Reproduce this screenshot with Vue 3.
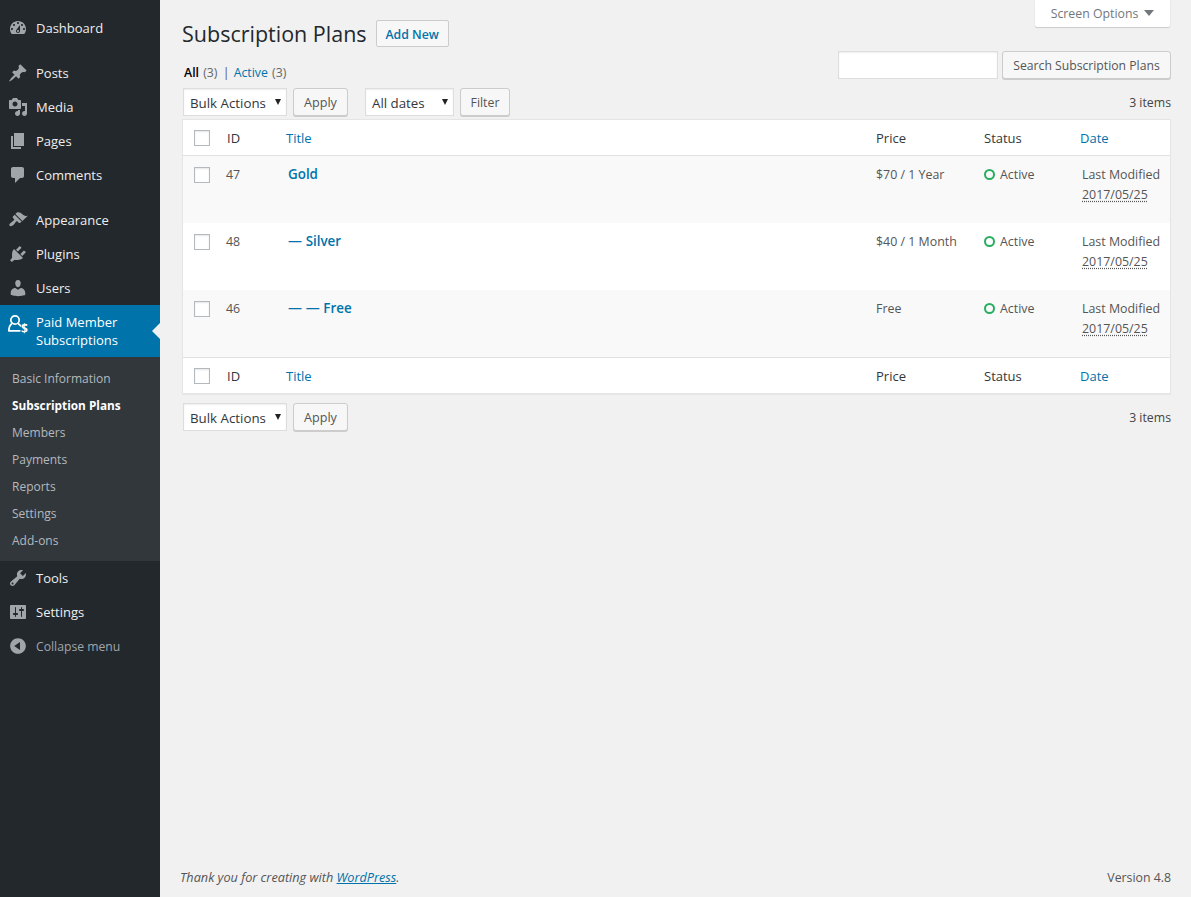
<script setup>
const ic = {
  dashboard: 'M3.76 16h12.48c1.1-1.37 1.76-3.11 1.76-5 0-4.42-3.58-8-8-8s-8 3.58-8 8c0 1.89.66 3.63 1.76 5zM10 4c.55 0 1 .45 1 1s-.45 1-1 1-1-.45-1-1 .45-1 1-1zM6 6c.55 0 1 .45 1 1s-.45 1-1 1-1-.45-1-1 .45-1 1-1zm8 0c.55 0 1 .45 1 1s-.45 1-1 1-1-.45-1-1 .45-1 1-1zm-5.37 5.55L12 7v6c0 1.1-.9 2-2 2s-2-.9-2-2c0-.57.24-1.08.63-1.45zM4 10c.55 0 1 .45 1 1s-.45 1-1 1-1-.45-1-1 .45-1 1-1zm12 0c.55 0 1 .45 1 1s-.45 1-1 1-1-.45-1-1 .45-1 1-1zm-5 3c0-.55-.45-1-1-1s-1 .45-1 1 .45 1 1 1 1-.45 1-1z',
  posts: 'M10.44 3.02l1.82-1.82 6.36 6.35-1.83 1.82c-1.05-.68-2.48-.57-3.41.36l-.75.75c-.92.93-1.04 2.35-.35 3.41l-1.83 1.82-2.41-2.41-2.8 2.79c-.42.42-3.38 2.71-3.8 2.29s1.86-3.39 2.28-3.81l2.79-2.79L4.1 9.36l1.83-1.82c1.05.69 2.48.57 3.4-.36l.75-.75c.93-.92 1.05-2.35.36-3.41z',
  media: 'M13 11V4c0-.55-.45-1-1-1h-1.67L9 1H5L3.67 3H2c-.55 0-1 .45-1 1v7c0 .55.45 1 1 1h10c.55 0 1-.45 1-1zM7 4.5c1.38 0 2.5 1.12 2.5 2.5S8.38 9.5 7 9.5 4.5 8.38 4.5 7 5.62 4.5 7 4.5zM14 6h5v10.5c0 1.38-1.12 2.5-2.5 2.5S14 17.88 14 16.5s1.12-2.5 2.5-2.5c.17 0 .34.02.5.05V9h-3V6zm-4 8.05V13h2v3.5c0 1.38-1.12 2.5-2.5 2.5S7 17.88 7 16.5 8.12 14 9.5 14c.17 0 .34.02.5.05z',
  pages: 'M6 15V2h10v13H6zm-1 1h8v2H3V5h2v11z',
  comments: 'M5 2h9c1.1 0 2 .9 2 2v7c0 1.1-.9 2-2 2h-2l-5 5v-5H5c-1.1 0-2-.9-2-2V4c0-1.1.9-2 2-2z',
  appearance: 'M14.48 11.06L7.41 3.99l1.5-1.5c.5-.56 2.3-.47 3.51.32 1.21.8 1.43 1.28 2.91 2.1 1.18.64 2.45 1.26 4.45.85zm-.71.71L6.7 4.7 4.93 6.47c-.39.39-.39 1.02 0 1.41l1.06 1.06c.39.39.39 1.03 0 1.42-.6.6-1.43 1.11-2.21 1.69-.35.26-.7.53-1.01.84C1.43 13.23.91 15.04 1.72 15.85s2.62.29 3.94-1.04c.31-.31.58-.66.84-1.01.58-.78 1.09-1.61 1.69-2.21.39-.39 1.02-.39 1.41 0l1.06 1.06c.39.39 1.02.39 1.41 0z',
  plugins: 'M13.11 4.36L9.87 7.6 8 5.73l3.24-3.24c.35-.34 1.05-.2 1.56.32.52.51.66 1.21.31 1.55zm-8 1.77l.91-1.12 9.01 9.01-1.19.84c-.71.71-2.63 1.16-3.82 1.16H6.14L4.9 17.26c-.59.59-1.54.59-2.12 0-.59-.58-.59-1.53 0-2.12l1.24-1.24v-3.88c0-1.13.4-3.19 1.09-3.89zm7.26 3.97l3.24-3.24c.34-.35 1.04-.21 1.55.31.52.51.66 1.21.31 1.55l-3.24 3.25z',
  users: 'M10 9.25c-2.27 0-2.73-3.44-2.73-3.44C7 4.02 7.82 2 9.97 2c2.16 0 2.98 2.02 2.71 3.81 0 0-.41 3.44-2.68 3.44zm0 2.57L12.72 10c2.39 0 4.52 2.33 4.52 4.53v2.49s-3.65 1.13-7.24 1.13c-3.65 0-7.24-1.13-7.24-1.13v-2.49c0-2.25 1.94-4.48 4.47-4.48z',
  tools: 'M16.68 9.77c-1.34 1.34-3.3 1.67-4.95.99l-5.41 6.52c-.99.99-2.59.99-3.58 0s-.99-2.59 0-3.57l6.52-5.42c-.68-1.65-.35-3.61.99-4.95 1.28-1.28 3.12-1.62 4.72-1.06l-2.89 2.89 2.82 2.82 2.86-2.87c.53 1.58.18 3.39-1.08 4.65zM3.81 16.21c.4.39 1.04.39 1.43 0 .4-.4.4-1.04 0-1.43-.39-.4-1.03-.4-1.43 0-.39.39-.39 1.03 0 1.43z',
  settings: 'M18 16V4c0-.55-.45-1-1-1H3c-.55 0-1 .45-1 1v12c0 .55.45 1 1 1h14c.55 0 1-.45 1-1zM8 11h1c.55 0 1 .45 1 1s-.45 1-1 1H8v1.5c0 .28-.22.5-.5.5s-.5-.22-.5-.5V13H6c-.55 0-1-.45-1-1s.45-1 1-1h1V5.5c0-.28.22-.5.5-.5s.5.22.5.5V11zm5-2h-1c-.55 0-1-.45-1-1s.45-1 1-1h1V5.5c0-.28.22-.5.5-.5s.5.22.5.5V7h1c.55 0 1 .45 1 1s-.45 1-1 1h-1v5.5c0 .28-.22.5-.5.5s-.5-.22-.5-.5V9z',
  collapse: 'M10 2.16c4.33 0 7.84 3.51 7.84 7.84s-3.51 7.84-7.84 7.84S2.16 14.33 2.16 10 5.71 2.16 10 2.16zm2 11.72V6.12L6.18 9.97z'
}
const group1 = [['Posts','posts'],['Media','media'],['Pages','pages'],['Comments','comments']]
const group2 = [['Appearance','appearance'],['Plugins','plugins'],['Users','users']]
const sub = ['Basic Information','Subscription Plans','Members','Payments','Reports','Settings','Add-ons']
const rows = [
  { id: 47, prefix: '', title: 'Gold', price: '$70 / 1 Year' },
  { id: 48, prefix: '— ', title: 'Silver', price: '$40 / 1 Month' },
  { id: 46, prefix: '— — ', title: 'Free', price: 'Free' }
]
</script>

<template>
  <div class="page">
    <aside class="side">
      <ul class="menu first">
        <li class="item"><svg class="ico" viewBox="0 0 20 20"><path :d="ic.dashboard"/></svg>Dashboard</li>
      </ul>
      <ul class="menu">
        <li v-for="g in group1" :key="g[0]" class="item"><svg class="ico" viewBox="0 0 20 20"><path :d="ic[g[1]]"/></svg>{{ g[0] }}</li>
      </ul>
      <ul class="menu">
        <li v-for="g in group2" :key="g[0]" class="item"><svg class="ico" viewBox="0 0 20 20"><path :d="ic[g[1]]"/></svg>{{ g[0] }}</li>
        <li class="item current">
          <svg class="ico pms" viewBox="0 0 24 24">
            <circle cx="9" cy="9" r="4.200" fill="none" stroke="#fff" stroke-width="1.700"/>
            <path d="M5.700 12.600C3.800 14.200 2.800 16.800 2.800 19.800h11" fill="none" stroke="#fff" stroke-width="1.700" stroke-linecap="round" stroke-linejoin="round"/>
            <path d="M12.500 12.700c.8.6 1.500 1.300 2 2.200" fill="none" stroke="#fff" stroke-width="1.700" stroke-linecap="round"/>
          </svg>
          <span class="dollar">$</span>
          <span>Paid Member<br>Subscriptions</span>
        </li>
        <li class="submenu">
          <a v-for="s in sub" :key="s" :class="{ on: s === 'Subscription Plans' }">{{ s }}</a>
        </li>
        <li class="item"><svg class="ico" viewBox="0 0 20 20"><path :d="ic.tools"/></svg>Tools</li>
        <li class="item"><svg class="ico" viewBox="0 0 20 20"><path :d="ic.settings"/></svg>Settings</li>
        <li class="item collapse"><svg class="ico" viewBox="0 0 20 20"><path :d="ic.collapse"/></svg>Collapse menu</li>
      </ul>
    </aside>

    <main class="main">
      <div class="screen-wrap"><button class="screen">Screen Options<i class="tri"></i></button></div>

      <div class="heading">
        <h1>Subscription Plans</h1>
        <a class="add">Add New</a>
      </div>

      <div class="filters">
        <div class="views"><b>All</b> <span class="n">(3)</span> <span class="sep">|</span> <a>Active</a> <span class="n">(3)</span></div>
        <div class="search"><input type="text"><button class="btn">Search Subscription Plans</button></div>
      </div>

      <div class="nav top">
        <div class="sel w104"><select><option>Bulk Actions</option></select></div>
        <button class="btn apply">Apply</button>
        <div class="sel w89 gap"><select><option>All dates</option></select></div>
        <button class="btn filter">Filter</button>
        <span class="count">3 items</span>
      </div>

      <table class="tbl">
        <thead>
          <tr>
            <th class="c-cb"><i class="cb"></i></th>
            <th class="c-id">ID</th>
            <th class="c-title"><a>Title</a></th>
            <th class="c-price">Price</th>
            <th class="c-status">Status</th>
            <th class="c-date"><a>Date</a></th>
          </tr>
        </thead>
        <tbody>
          <tr v-for="r in rows" :key="r.id">
            <td class="c-cb"><i class="cb"></i></td>
            <td class="c-id">{{ r.id }}</td>
            <td class="c-title"><a>{{ r.prefix }}<strong>{{ r.title }}</strong></a></td>
            <td class="c-price">{{ r.price }}</td>
            <td class="c-status"><i class="dot"></i>Active</td>
            <td class="c-date">Last Modified<br><abbr>2017/05/25</abbr></td>
          </tr>
        </tbody>
        <tfoot>
          <tr>
            <th class="c-cb"><i class="cb"></i></th>
            <th class="c-id">ID</th>
            <th class="c-title"><a>Title</a></th>
            <th class="c-price">Price</th>
            <th class="c-status">Status</th>
            <th class="c-date"><a>Date</a></th>
          </tr>
        </tfoot>
      </table>

      <div class="nav bottom">
        <div class="sel w104"><select><option>Bulk Actions</option></select></div>
        <button class="btn apply">Apply</button>
        <span class="count">3 items</span>
      </div>

      <footer class="foot">
        <span class="thanks">Thank you for creating with <a>WordPress</a>.</span>
        <span>Version 4.8</span>
      </footer>
    </main>
  </div>
</template>

<style>
html, body { margin: 0; background: #f1f1f1; }
</style>

<style scoped>
.page { display: flex; min-height: 897px; font-family: "Open Sans", "Noto Sans", sans-serif; font-size: 12.300px; color: #444; }
ul { list-style: none; margin: 0; padding: 0; }
a { color: #0073aa; }

.side { width: 160px; flex: none; background: #23282d; color: #eee; font-size: 13px; }
.menu.first { margin-top: 11px; }
.menu { margin-bottom: 11px; }
.item { position: relative; display: flex; align-items: center; height: 34px; padding-left: 36px; }
.ico { position: absolute; left: 8px; top: 7px; width: 20px; height: 20px; fill: #a0a5aa; }
.current { height: 52px; background: #0073aa; color: #fff; line-height: 18px; }
.current::after { content: ""; position: absolute; right: 0; top: 18px; border: 8px solid transparent; border-right-color: #f1f1f1; border-left: 0; }
.pms { top: 6px; left: 6px; width: 24px; height: 24px; }
.dollar { position: absolute; left: 21px; top: 17px; font-size: 12px; font-weight: 700; line-height: 14px; }
.submenu { display: flex; flex-direction: column; background: #32373c; padding: 8px 0 7px; font-size: 12px; }
.submenu a { height: 27px; line-height: 27px; padding-left: 12px; color: #b4b9be; }
.submenu a.on { color: #fff; font-weight: 700; font-size: 11.800px; }
.collapse { color: #a0a5aa; font-size: 12.200px; }

.main { flex: 1; min-width: 0; display: flex; flex-direction: column; padding: 0 20px 0 22px; }

.screen-wrap { display: flex; justify-content: flex-end; height: 0; }
.screen { display: flex; align-items: flex-start; justify-content: center; box-sizing: border-box; width: 135px; height: 27px; padding: 5px 0 0; margin-right: 1px; border: 0; border-radius: 0 0 2px 2px; background: #fff; color: #72777c; font: inherit; line-height: 17px; box-shadow: 0 1px 1px rgba(0,0,0,.14), 0 0 0 .5px rgba(0,0,0,.04); }
.tri { display: inline-block; margin: 5px 0 0 6px; border: 5px solid transparent; border-top: 6px solid #72777c; border-bottom: 0; }

.heading { display: flex; align-items: center; height: 27px; margin-top: 20px; }
h1 { margin: 0 0 1px; font-size: 21.500px; font-weight: 400; color: #23282d; line-height: 27px; }
.add { display: block; margin-left: 9px; height: 25px; line-height: 27px; width: 71px; text-align: center; border: 1px solid #ccc; border-radius: 2px; background: #f7f7f7; font-weight: 600; }

.filters { display: flex; justify-content: space-between; height: 37px; margin-top: 4px; }
.views { margin: 13px 0 0 2px; line-height: 18px; color: #666; }
.views b { font-weight: 600; color: #000; }
.views .n { margin-left: 1px; }
.views .sep { margin: 0 1px 0 2px; color: #555; }
.search { display: flex; }
.search input { box-sizing: border-box; width: 160px; height: 28px; margin: 0 4px 0 0; border: 1px solid #ddd; background: #fff; box-shadow: inset 0 1px 2px rgba(0,0,0,.07); outline: 0; }

.btn { box-sizing: border-box; height: 28px; padding: 0 10px; border: 1px solid #ccc; border-radius: 3px; background: #f7f7f7; box-shadow: 0 1px 0 #ccc; color: #555; font: inherit; white-space: nowrap; }
.search .btn { width: 169px; padding: 0; font-size: 12.200px; }

.nav { display: flex; align-items: center; height: 28px; }
.nav.bottom { margin-top: 9px; }
.nav .count { margin-left: auto; }
.sel { position: relative; box-sizing: border-box; height: 28px; margin-left: 1px; }
.sel select { appearance: none; -webkit-appearance: none; width: 100%; height: 28px; box-sizing: border-box; padding: 2px 0 0 6px; border: 1px solid #ddd; border-radius: 0; background: #fff; color: #32373c; font: inherit; font-size: 13.300px; box-shadow: inset 0 1px 2px rgba(0,0,0,.07); }
.sel::after { content: ""; position: absolute; right: 6px; top: 11px; border: 3.500px solid transparent; border-top: 6px solid #222; border-bottom: 0; pointer-events: none; }
.w104 { width: 104px; }
.w89 { width: 89px; }
.gap { margin-left: 17px; }
.apply { width: 55px; margin-left: 6px; padding: 0; font-size: 12.600px; }
.filter { width: 50px; margin-left: 6px; padding: 0; }

.tbl { width: 989px; margin-top: 3px; border: 1px solid #e5e5e5; border-collapse: separate; border-spacing: 0; table-layout: fixed; background: #fff; box-shadow: 0 1px 1px rgba(0,0,0,.04); }
.tbl th { padding: 0 0 0 10px; box-sizing: border-box; font-weight: 400; text-align: left; color: #32373c; font-size: 13px; }
.tbl thead th { border-bottom: 1px solid #e1e1e1; height: 36px; }
.tbl tfoot th { border-top: 1px solid #e1e1e1; height: 36px; }
.tbl td { height: 67px; box-sizing: border-box; padding: 9px 0 0 12px; vertical-align: top; line-height: 20px; color: #555; font-size: 12.400px; }
.tbl tbody tr:nth-child(odd) td { background: #f9f9f9; }
.tbl .c-cb { width: 34px; padding: 0 0 0 11px; }
.tbl td.c-cb { padding-top: 11px; }
.tbl .c-id { width: 59px; }
.tbl td.c-id { padding-left: 9px; }
.tbl .c-title { width: 590px; }
.tbl .c-price { width: 108px; }
.tbl td.c-price, .tbl td.c-status { padding-left: 10px; }
.tbl .c-status { width: 96px; }
.tbl td.c-title { padding-top: 8px; font-size: 14px; }
.tbl td.c-date { line-height: 19.500px; padding-top: 9px; }
.tbl strong { font-weight: 600; font-size: 13.400px; }
.cb { display: block; width: 14px; height: 14px; border: 1px solid #b4b9be; background: #fff; box-shadow: inset 0 1px 2px rgba(0,0,0,.1); }
.dot { display: inline-block; box-sizing: border-box; width: 11px; height: 11px; margin-right: 5px; border: 2.500px solid #27ae60; border-radius: 50%; vertical-align: -1px; }
abbr { text-decoration: underline dotted; text-underline-offset: 2px; }

.foot { display: flex; justify-content: space-between; margin: auto 0 0 -2px; padding-bottom: 10px; line-height: 18px; color: #555; }
.thanks { font-style: italic; font-size: 12.700px; line-height: 16px; }
.thanks a { text-decoration: underline; }
</style>
